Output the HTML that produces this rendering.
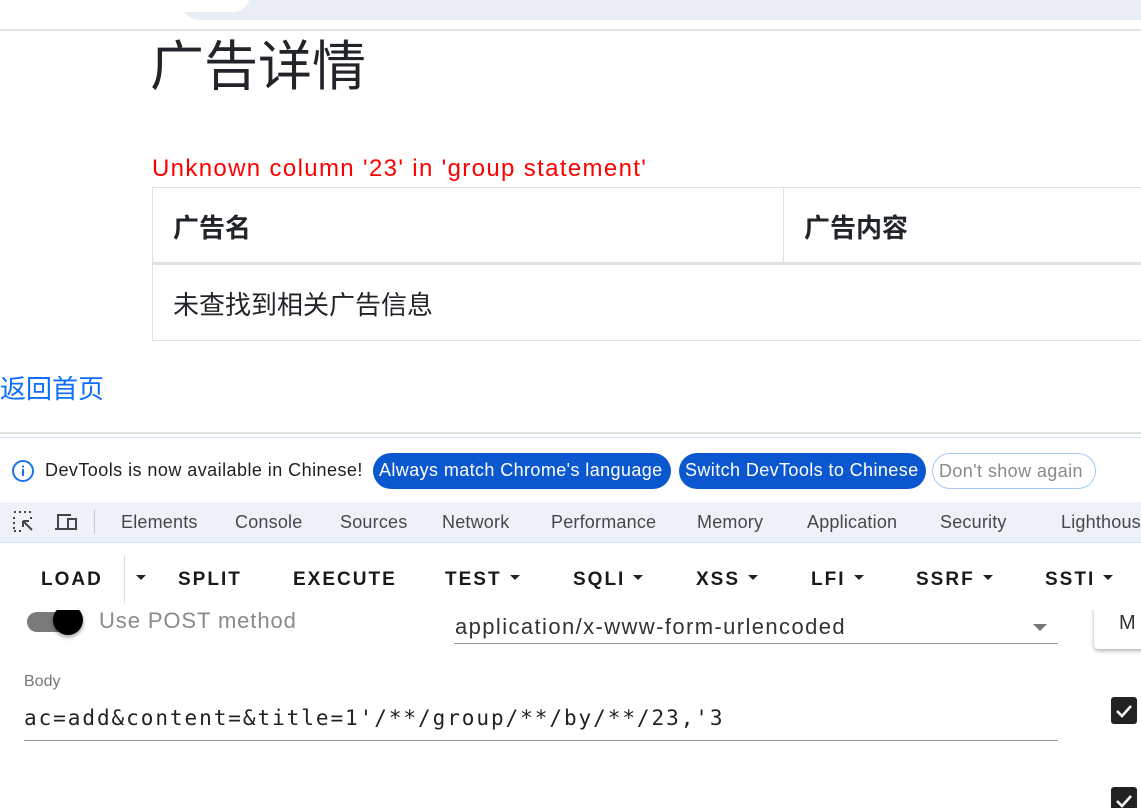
<!DOCTYPE html>
<html><head><meta charset="utf-8"><style>
*{margin:0;padding:0;box-sizing:border-box}
body{width:1141px;height:808px;overflow:hidden;background:#fff;position:relative;font-family:"Liberation Sans","Noto Sans CJK SC",sans-serif;color:#212529}
.a{position:absolute;white-space:nowrap}
.cjk{font-family:"Noto Sans CJK SC","Liberation Sans",sans-serif}
.tab{position:absolute;top:510px;font-size:18px;color:#474747;line-height:24px;letter-spacing:0.2px}
.hb{position:absolute;top:568px;font-size:19px;font-weight:bold;letter-spacing:2px;color:#1a1a1a;line-height:24px}
.tri{display:inline-block;width:0;height:0;border-left:5px solid transparent;border-right:5px solid transparent;border-top:5px solid #222;vertical-align:middle;margin-left:8px;margin-top:-4px}
.pill{position:absolute;top:453px;height:36px;border-radius:18px;font-size:18px;line-height:34px;padding:0 6px;color:#fff;background:#0b57d0;letter-spacing:0.4px}
</style></head><body>
<div class="a" style="left:180px;top:-20px;width:980px;height:40px;border-radius:20px;background:#e9edf6"></div>
<div class="a" style="left:165px;top:-22px;width:85px;height:34px;border-radius:17px;background:#fff"></div>
<div class="a" style="left:0;top:29px;width:1141px;height:2px;background:#e3e3e3"></div>
<div class="a cjk" style="left:150px;top:25px;font-size:54px;line-height:74px;color:#212529">广告详情</div>
<div class="a" style="left:152px;top:154px;font-size:24px;line-height:30px;color:#f00;letter-spacing:1.35px">Unknown column '23' in 'group statement'</div>
<div class="a" style="left:152px;top:187px;width:1000px;height:154px;border:1px solid #dee2e6"></div>
<div class="a" style="left:783px;top:187px;width:1px;height:76px;background:#dee2e6"></div>
<div class="a" style="left:152px;top:262px;width:1000px;height:3px;background:#dee2e6"></div>
<div class="a cjk" style="left:173px;top:209px;font-size:26px;line-height:36px;font-weight:bold">广告名</div>
<div class="a cjk" style="left:804px;top:209px;font-size:26px;line-height:36px;font-weight:bold">广告内容</div>
<div class="a cjk" style="left:173px;top:286px;font-size:26px;line-height:36px">未查找到相关广告信息</div>
<div class="a cjk" style="left:0;top:370px;font-size:26px;line-height:36px;color:#0d6efd">返回首页</div>
<div class="a" style="left:0;top:432px;width:1141px;height:2px;background:#e3e3e3"></div>
<div class="a" style="left:0;top:437px;width:1141px;height:1px;background:#d3e3fd"></div>
<svg class="a" style="left:11px;top:459px" width="24" height="24" viewBox="0 0 24 24"><circle cx="12" cy="12" r="10" fill="none" stroke="#1a73e8" stroke-width="2"/><rect x="11" y="10" width="2" height="7" fill="#1a73e8"/><rect x="11" y="6.5" width="2" height="2" fill="#1a73e8"/></svg>
<div class="a" style="left:45px;top:458px;font-size:18px;line-height:24px;color:#1f1f1f;letter-spacing:0.45px">DevTools is now available in Chinese!</div>
<div class="pill" style="left:373px;width:298px">Always match Chrome's language</div>
<div class="pill" style="left:679px;width:247px">Switch DevTools to Chinese</div>
<div class="pill" style="left:932px;width:164px;background:#fff;color:#8a8a8a;border:1px solid #a8c7fa">Don't show again</div>
<div class="a" style="left:0;top:502px;width:1141px;height:41px;background:#edf2fa;border-bottom:1px solid #d3e3fd"></div>
<svg class="a" style="left:12px;top:510px" width="24" height="24" viewBox="0 0 24 24" fill="none" stroke="#444" stroke-width="2"><path d="M2 2h2M7 2h2M12 2h2M17 2h2M2 7v2M2 12v2M2 17v2M2 21h2M7 21h2M19 7v2"/><path d="M11 11l9 9M11 11h6M11 11v6"/></svg>
<svg class="a" style="left:53px;top:510px" width="26" height="24" viewBox="0 0 26 24" fill="none" stroke="#444" stroke-width="2"><path d="M5 18V5h13M2 19h12"/><rect x="15" y="9" width="8" height="10"/></svg>
<div class="a" style="left:94px;top:510px;width:1px;height:24px;background:#c4c7cc"></div>
<div class="tab" style="left:121px">Elements</div>
<div class="tab" style="left:235px">Console</div>
<div class="tab" style="left:340px">Sources</div>
<div class="tab" style="left:442px">Network</div>
<div class="tab" style="left:551px">Performance</div>
<div class="tab" style="left:697px">Memory</div>
<div class="tab" style="left:807px">Application</div>
<div class="tab" style="left:940px">Security</div>
<div class="tab" style="left:1061px">Lighthouse</div>
<div class="hb" style="left:41px">LOAD</div>
<div class="a" style="left:124px;top:555px;width:1px;height:48px;background:#ddd"></div>
<div class="hb" style="left:128px"><span class="tri"></span></div>
<div class="hb" style="left:178px">SPLIT</div>
<div class="hb" style="left:293px">EXECUTE</div>
<div class="hb" style="left:445px">TEST<span class="tri"></span></div>
<div class="hb" style="left:573px">SQLI<span class="tri"></span></div>
<div class="hb" style="left:696px">XSS<span class="tri"></span></div>
<div class="hb" style="left:811px">LFI<span class="tri"></span></div>
<div class="hb" style="left:916px">SSRF<span class="tri"></span></div>
<div class="hb" style="left:1045px">SSTI<span class="tri"></span></div>
<div class="a" style="left:0;top:610px;width:1141px;height:198px;overflow:hidden">
 <div class="a" style="left:27px;top:2px;width:52px;height:20px;border-radius:10px;background:#7a7a7a"></div>
 <div class="a" style="left:53px;top:-5px;width:30px;height:30px;border-radius:50%;background:#000;box-shadow:0 2px 4px rgba(0,0,0,.4)"></div>
 <div class="a" style="left:99px;top:-3px;font-size:22px;line-height:28px;color:#8a8a8a;letter-spacing:0.9px">Use POST method</div>
 <div class="a" style="left:455px;top:3px;font-size:22px;line-height:28px;color:#333;letter-spacing:1.4px">application/x-www-form-urlencoded</div>
 <div class="a" style="left:1033px;top:14px;border-left:7px solid transparent;border-right:7px solid transparent;border-top:7px solid #777"></div>
 <div class="a" style="left:454px;top:33px;width:604px;height:1px;background:#999"></div>
 <div class="a" style="left:1094px;top:-12px;width:80px;height:51px;border-radius:4px;background:#fff;box-shadow:0 2px 4px rgba(0,0,0,.3)"></div>
 <div class="a" style="left:1119px;top:0;font-size:20px;line-height:26px;color:#333">M</div>
 <div class="a" style="left:24px;top:62px;font-size:16px;line-height:20px;color:#777">Body</div>
 <div class="a" style="left:24px;top:93px;font-family:'DejaVu Sans Mono','Liberation Mono',monospace;font-size:21px;line-height:30px;color:#222;letter-spacing:1.95px">ac=add&amp;content=&amp;title=1'/**/group/**/by/**/23,'3</div>
 <div class="a" style="left:24px;top:130px;width:1034px;height:1px;background:#999"></div>
 <div class="a" style="left:1111px;top:87px;width:26px;height:27px;border-radius:3px;background:#222"></div>
 <svg class="a" style="left:1111px;top:87px" width="26" height="27"><path d="M6 14l5 5 9-10" fill="none" stroke="#fff" stroke-width="2.5"/></svg>
 <div class="a" style="left:1111px;top:177px;width:26px;height:27px;border-radius:3px;background:#222"></div>
 <svg class="a" style="left:1111px;top:177px" width="26" height="27"><path d="M6 14l5 5 9-10" fill="none" stroke="#fff" stroke-width="2.5"/></svg>
</div>
</body></html>
